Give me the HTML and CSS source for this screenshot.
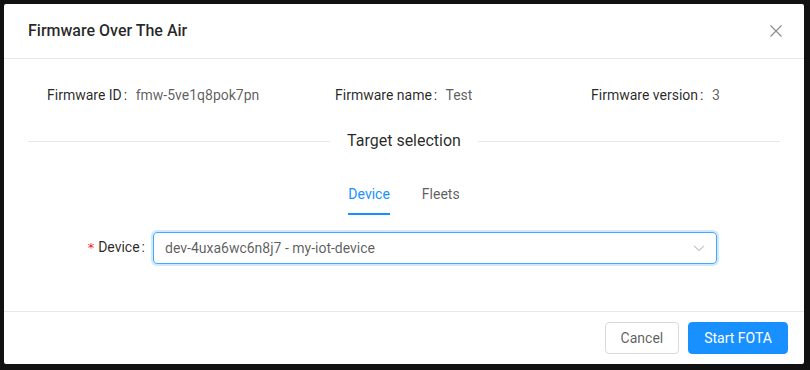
FILE: index.html
```html
<!DOCTYPE html>
<html lang="en">
<head>
    <meta charset="UTF-8">
    <meta name="viewport" content="width=device-width, initial-scale=1.0">
    <title>Firmware Over The Air</title>
    <link rel="stylesheet" href="styles.css">
</head>
<body>

<div class="modal">
    <div class="modal-header">
        <div class="modal-title">Firmware Over The Air</div>
        <button class="modal-close" aria-label="Close">
            <svg width="12" height="12" viewBox="0 0 12 12">
                <path d="M0.5 0.5 L11.5 11.5 M11.5 0.5 L0.5 11.5" stroke="currentColor" stroke-width="1.2" fill="none"/>
            </svg>
        </button>
    </div>

    <div class="modal-body">
        <div class="descriptions">
            <div class="desc-item">
                <span class="desc-label">Firmware ID</span>
                <span class="desc-value">fmw-5ve1q8pok7pn</span>
            </div>
            <div class="desc-item">
                <span class="desc-label">Firmware name</span>
                <span class="desc-value">Test</span>
            </div>
            <div class="desc-item">
                <span class="desc-label">Firmware version</span>
                <span class="desc-value">3</span>
            </div>
        </div>

        <div class="divider">
            <span class="divider-text">Target selection</span>
        </div>

        <div class="tabs">
            <div class="tab active">Device</div>
            <div class="tab">Fleets</div>
        </div>

        <div class="form-row">
            <label class="form-label"><span class="required">*</span>Device</label>
            <div class="form-control">
                <div class="select">
                    <span class="select-value">dev-4uxa6wc6n8j7 - my-iot-device</span>
                    <svg class="select-arrow" width="12" height="12" viewBox="0 0 12 12">
                        <path d="M1 3.8 L6 8.6 L11 3.8" stroke="currentColor" stroke-width="1.1" fill="none"/>
                    </svg>
                </div>
            </div>
        </div>
    </div>

    <div class="modal-footer">
        <button class="btn">Cancel</button>
        <button class="btn btn-primary">Start FOTA</button>
    </div>
</div>

</body>
</html>
```

FILE: styles.css
```css
body {
    font-family: Roboto, "Liberation Sans", sans-serif;
    font-size: 14px;
    background-color: #111111;
    margin: 0;
    padding: 4px;
}

.modal {
    width: 800px;
    height: 360px;
    background: #ffffff;
    border-radius: 2px;
    display: flex;
    flex-direction: column;
}

.modal-header {
    display: flex;
    align-items: center;
    justify-content: space-between;
    height: 54px;
    padding: 0 0 0 24px;
    border-bottom: 1px solid #e8e8e8;
}

.modal-title {
    font-size: 16px;
    font-weight: 500;
    line-height: 22px;
    color: rgba(0, 0, 0, 0.85);
}

.modal-close {
    width: 56px;
    height: 54px;
    border: none;
    background: none;
    padding: 0;
    color: rgba(0, 0, 0, 0.45);
    display: flex;
    align-items: center;
    justify-content: center;
}

.modal-body {
    flex: 1;
    padding: 25px 24px 0;
}

.descriptions {
    display: grid;
    grid-template-columns: 288px 256px auto;
    padding-left: 19px;
    line-height: 22px;
}

.desc-label {
    color: rgba(0, 0, 0, 0.85);
}

.desc-label::after {
    content: ":";
    margin: 0 5px 0 2px;
}

.desc-value {
    color: rgba(0, 0, 0, 0.65);
}

.divider {
    display: flex;
    align-items: center;
    margin-top: 24px;
    height: 22px;
}

.divider::before, .divider::after {
    content: "";
    flex: 1;
    border-top: 1px solid #e8e8e8;
}

.divider-text {
    font-size: 16px;
    line-height: 22px;
    padding: 0 17px;
    color: rgba(0, 0, 0, 0.85);
}

.tabs {
    display: flex;
    justify-content: center;
    gap: 32px;
    margin-top: 19px;
}

.tab {
    padding: 12px 0 8px;
    line-height: 22px;
    color: rgba(0, 0, 0, 0.65);
    border-bottom: 2px solid transparent;
}

.tab.active {
    color: #1890ff;
    border-bottom-color: #1890ff;
}

.form-row {
    display: flex;
    align-items: center;
    margin-top: 16px;
}

.form-label {
    width: 125px;
    text-align: right;
    line-height: 32px;
    color: rgba(0, 0, 0, 0.85);
}

.form-label::after {
    content: ":";
    margin: 0 8px 0 2px;
}

.required {
    color: #f5222d;
    margin-right: 4px;
    font-family: "DejaVu Sans", sans-serif;
    font-size: 13px;
}

.form-control {
    width: 564px;
}

.select {
    display: flex;
    align-items: center;
    justify-content: space-between;
    height: 32px;
    box-sizing: border-box;
    padding: 0 11px;
    border: 1px solid #40a9ff;
    border-radius: 4px;
    box-shadow: 0 0 0 2px rgba(24, 144, 255, 0.2);
}

.select-value {
    color: rgba(0, 0, 0, 0.65);
}

.select-arrow {
    color: rgba(0, 0, 0, 0.25);
}

.modal-footer {
    display: flex;
    justify-content: flex-end;
    gap: 9px;
    padding: 10px 16px;
    border-top: 1px solid #e8e8e8;
}

.btn {
    height: 32px;
    padding: 0 15px;
    font-family: inherit;
    font-size: 14px;
    color: rgba(0, 0, 0, 0.65);
    background: #ffffff;
    border: 1px solid #d9d9d9;
    border-radius: 4px;
}

.btn-primary {
    color: #ffffff;
    background-color: #1890ff;
    border-color: #1890ff;
}
```
